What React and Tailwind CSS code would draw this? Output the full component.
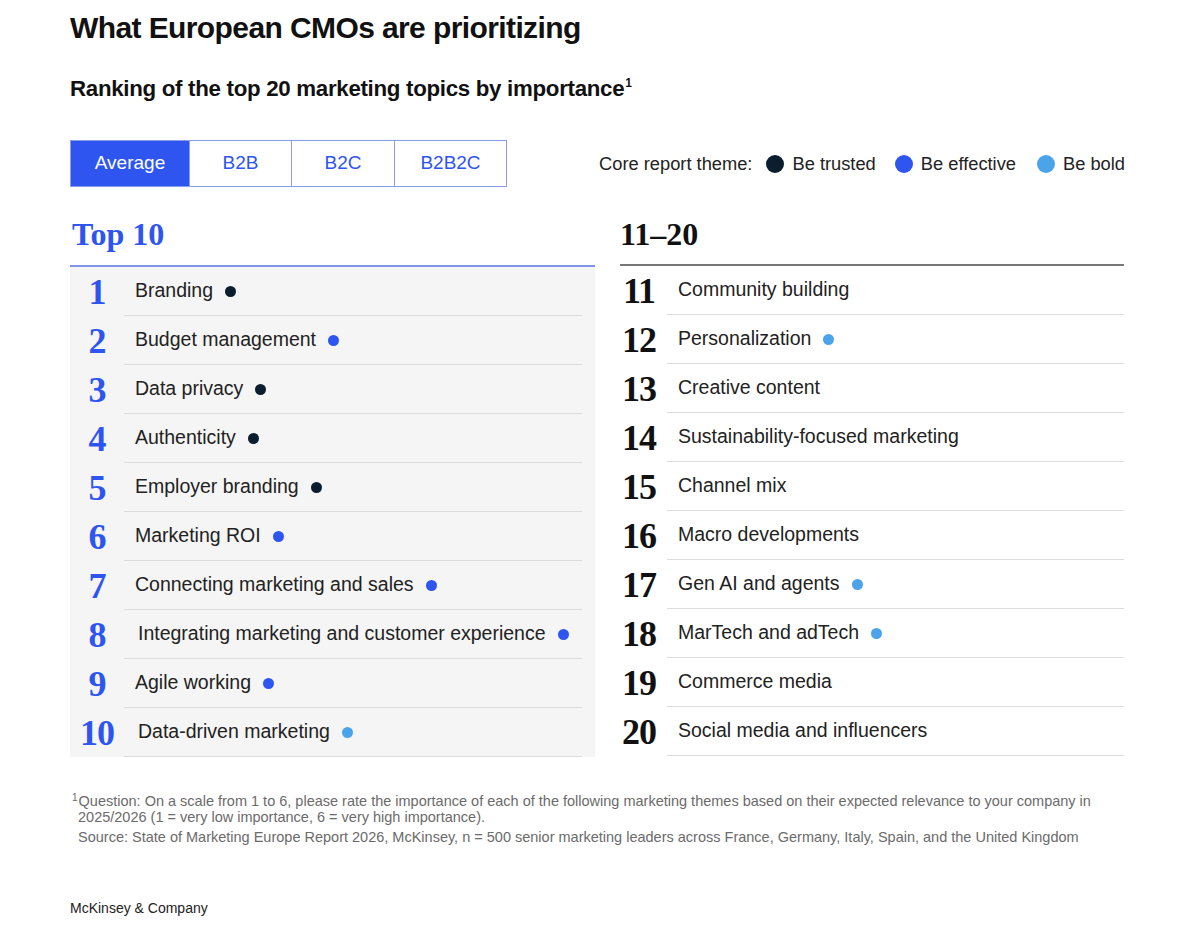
import React from 'react';

const TRUSTED = 'bg-[#0b1d2e]';
const EFFECTIVE = 'bg-[#2e55f0]';
const BOLD = 'bg-[#4ba3ea]';

const top10 = [
  { n: 1, label: 'Branding', dot: TRUSTED },
  { n: 2, label: 'Budget management', dot: EFFECTIVE },
  { n: 3, label: 'Data privacy', dot: TRUSTED },
  { n: 4, label: 'Authenticity', dot: TRUSTED },
  { n: 5, label: 'Employer branding', dot: TRUSTED },
  { n: 6, label: 'Marketing ROI', dot: EFFECTIVE },
  { n: 7, label: 'Connecting marketing and sales', dot: EFFECTIVE },
  { n: 8, label: 'Integrating marketing and customer experience', dot: EFFECTIVE, shift: true },
  { n: 9, label: 'Agile working', dot: EFFECTIVE },
  { n: 10, label: 'Data-driven marketing', dot: BOLD, shift: true },
];

const rest = [
  { n: 11, label: 'Community building' },
  { n: 12, label: 'Personalization', dot: BOLD },
  { n: 13, label: 'Creative content' },
  { n: 14, label: 'Sustainability-focused marketing' },
  { n: 15, label: 'Channel mix' },
  { n: 16, label: 'Macro developments' },
  { n: 17, label: 'Gen AI and agents', dot: BOLD },
  { n: 18, label: 'MarTech and adTech', dot: BOLD },
  { n: 19, label: 'Commerce media' },
  { n: 20, label: 'Social media and influencers' },
];

const serif = { fontFamily: '"Liberation Serif", "DejaVu Serif", serif' };

const Row = ({ item, blue }) => (
  <div className="flex h-[49px] items-stretch">
    <div
      className={`flex items-center justify-center font-bold text-[36px] tracking-[-1px] ${blue ? 'w-[54px] text-[#2e55f0]' : 'w-[38px] mr-[9px] text-[#111]'}`}
      style={serif}
    >
      {item.n}
    </div>
    <div className={`flex flex-1 items-center border-b border-[#dcdcdc] ${item.shift ? 'pl-[14px]' : 'pl-[11px]'}`}>
      <span className="text-[19.5px] text-[#222]">{item.label}</span>
      {item.dot && <span className={`ml-[12px] h-[11px] w-[11px] rounded-full ${item.dot}`} />}
    </div>
  </div>
);

export default function App() {
  return (
    <div
      className="w-[1200px] h-[948px] bg-white px-[70px] pt-[10px] text-[#111]"
      style={{ fontFamily: '"Liberation Sans", Arial, sans-serif' }}
    >
      <h1 className="text-[30px] font-bold leading-[36px] tracking-[-0.6px]">What European CMOs are prioritizing</h1>
      <h2 className="mt-[30px] flex items-start text-[22.3px] font-bold leading-[26px] tracking-[-0.3px]">
        <span>Ranking of the top 20 marketing topics by importance</span>
        <span className="ml-[1px] text-[12px] leading-[14px]">1</span>
      </h2>

      <div className="mt-[38px] flex items-center justify-between">
        <div className="flex h-[47px] border border-[#8a9cea]">
          <div className="flex w-[118px] items-center justify-center bg-[#2e55f0] text-[19px] text-white">Average</div>
          <div className="flex w-[102px] items-center justify-center border-l border-[#8a9cea] text-[19px] text-[#2e55f0]">B2B</div>
          <div className="flex w-[103px] items-center justify-center border-l border-[#8a9cea] text-[19px] text-[#2e55f0]">B2C</div>
          <div className="flex w-[112px] items-center justify-center border-l border-[#8a9cea] text-[19px] text-[#2e55f0]">B2B2C</div>
        </div>
        <div className="mr-[5px] flex items-center text-[18.3px] text-[#222]">
          <span>Core report theme:</span>
          <span className={`ml-[14px] h-[18px] w-[18px] rounded-full ${TRUSTED}`} />
          <span className="ml-[8px]">Be trusted</span>
          <span className={`ml-[19px] h-[18px] w-[18px] rounded-full ${EFFECTIVE}`} />
          <span className="ml-[8px]">Be effective</span>
          <span className={`ml-[21px] h-[18px] w-[18px] rounded-full ${BOLD}`} />
          <span className="ml-[8px]">Be bold</span>
        </div>
      </div>

      <div className="mt-[29px] flex gap-[25px]">
        <div className="w-[525px]">
          <div className="h-[49px] pl-[2px] text-[32px] font-bold leading-[36px] text-[#2e55f0]" style={serif}>Top 10</div>
          <div className="border-t-2 border-[#8196ea] bg-[#f5f5f5] pr-[13px]">
            {top10.map((item) => (
              <Row key={item.n} item={item} blue />
            ))}
          </div>
        </div>
        <div className="w-[504px]">
          <div className="h-[48px] text-[32px] font-bold leading-[36px] text-[#111]" style={serif}>11–20</div>
          <div className="border-t-2 border-[#777]">
            {rest.map((item) => (
              <Row key={item.n} item={item} />
            ))}
          </div>
        </div>
      </div>

      <div className="mt-[36px] text-[14.5px] leading-[16px] text-[#6b6b6b]">
        <p className="pl-[2px]">
          <sup className="text-[10px] mr-[1px]">1</sup>Question: On a scale from 1 to 6, please rate the importance of each of the following marketing themes based on their expected relevance to your company in
        </p>
        <p className="pl-[8px]">2025/2026 (1 = very low importance, 6 = very high importance).</p>
        <p className="pl-[8px] mt-[4px]">Source: State of Marketing Europe Report 2026, McKinsey, n = 500 senior marketing leaders across France, Germany, Italy, Spain, and the United Kingdom</p>
      </div>

      <div className="mt-[53px] text-[14px] text-[#222]">McKinsey &amp; Company</div>
    </div>
  );
}
